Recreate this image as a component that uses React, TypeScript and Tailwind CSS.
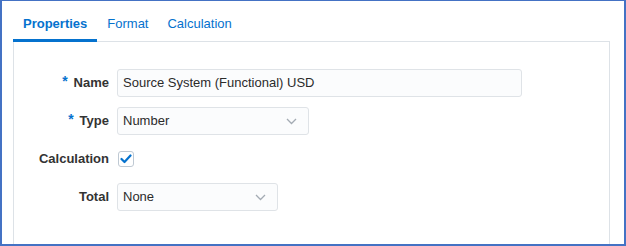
import React from "react";

function Chevron() {
  return (
    <svg width="11" height="7" viewBox="0 0 11 7" fill="none" stroke="#a3abb3" strokeWidth="1.3">
      <polyline points="1,1 5.5,5.5 10,1" />
    </svg>
  );
}

function Label({ text, required }: { text: string; required?: boolean }) {
  return (
    <div className="flex items-center justify-end h-[28px] font-bold text-[13px] text-[#333333]">
      {required && <span className="text-[#0572ce] text-[14px] font-bold leading-none mr-[6px] -mt-[5px]">*</span>}
      <span>{text}</span>
    </div>
  );
}

function Select({ value, width }: { value: string; width: string }) {
  return (
    <div
      className={`${width} h-[28px] flex items-center justify-between pl-[5px] pr-[11px] bg-[#fbfcfd] border border-[#dfe3e7] rounded-[3px] text-[13px] text-[#2b2b2b]`}
    >
      <span>{value}</span>
      <Chevron />
    </div>
  );
}

export default function App() {
  return (
    <div
      className="w-[626px] h-[246px] overflow-hidden bg-white border-[#4472c4] border-l-2 border-r-2 border-b-2 border-t flex flex-col pl-[11px] pr-[14px]"
      style={{ fontFamily: '"Liberation Sans", Arial, sans-serif' }}
    >
      {/* tabs */}
      <div className="flex text-[13px] leading-[16px] text-[#0572ce] relative z-10 -mb-px">
        <div className="pt-[15px] pb-[7px] px-[10px] font-bold border-b-[3px] border-[#0572ce]">Properties</div>
        <div className="pt-[15px] pb-[7px] px-[10px]">Format</div>
        <div className="pt-[15px] pb-[7px] px-[9px]">Calculation</div>
      </div>

      {/* panel */}
      <div className="flex-1 border-t border-l border-r border-[#dde2e7] pt-[27px]">
        <div className="grid grid-cols-[95px_1fr] gap-x-2 gap-y-2.5">
          <Label text="Name" required />
          <div className="w-[405px] h-[28px] flex items-center pl-[5px] bg-[#fbfcfd] border border-[#dfe3e7] rounded-[3px] text-[13px] text-[#2b2b2b]">
            Source System (Functional) USD
          </div>

          <Label text="Type" required />
          <Select value="Number" width="w-[192px]" />

          <Label text="Calculation" />
          <div className="h-[28px] flex items-center">
            <div className="ml-px w-[16px] h-[16px] border border-[#bfc9d3] rounded-[3px] bg-white flex items-center justify-center">
              <svg width="12" height="10" viewBox="0 0 12 10" fill="none" stroke="#0572ce" strokeWidth="2.2" strokeLinecap="round" strokeLinejoin="round">
                <polyline points="1.5,5 4.5,8 10.5,1.5" />
              </svg>
            </div>
          </div>

          <Label text="Total" />
          <Select value="None" width="w-[161px]" />
        </div>
      </div>
    </div>
  );
}
